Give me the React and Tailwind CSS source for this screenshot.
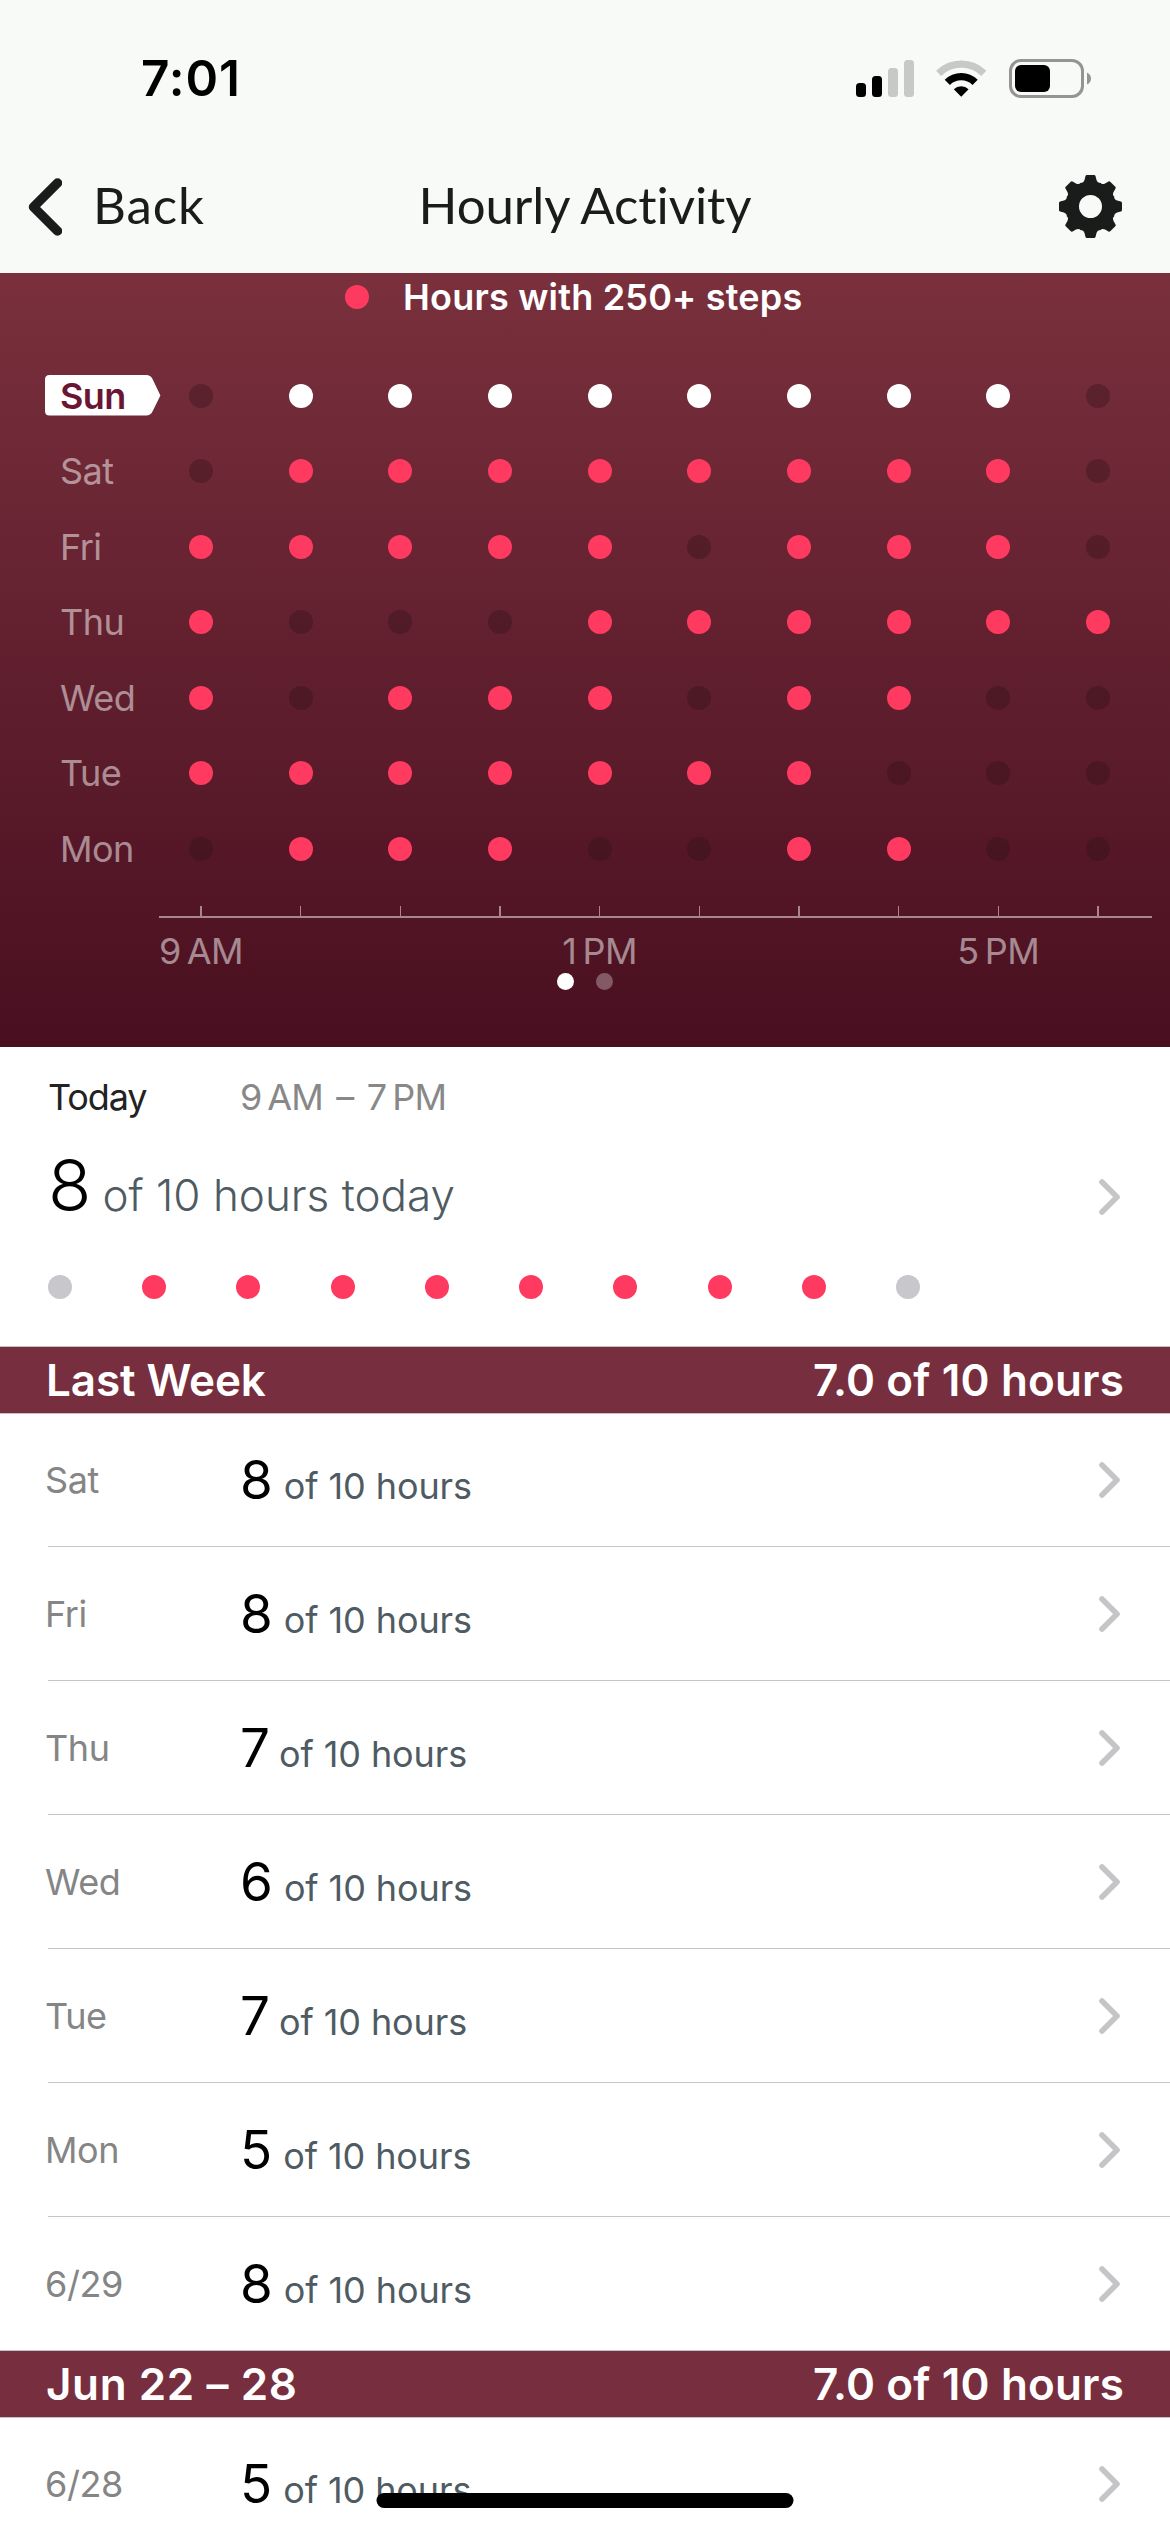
const CHART = [
  ["Sun", "0111111110"],
  ["Sat", "0111111110"],
  ["Fri", "1111101110"],
  ["Thu", "1000111111"],
  ["Wed", "1011101100"],
  ["Tue", "1111111000"],
  ["Mon", "0111001100"],
];

const AXIS_LABELS = { 0: "9\u2009AM", 4: "1\u2009PM", 8: "5\u2009PM" };

const LAST_WEEK = [
  ["Sat", 8],
  ["Fri", 8],
  ["Thu", 7],
  ["Wed", 6],
  ["Tue", 7],
  ["Mon", 5],
  ["6/29", 8],
];

const GEAR_TEETH = [0, 45, 90, 135, 180, 225, 270, 315];

function StatusBar() {
  return (
    <div className="flex h-[156px] items-center justify-between pl-[141px] pr-[79px]">
      <span className="text-[49.5px] font-semibold tracking-[0.9px] text-black">7:01</span>
      <div className="flex items-center">
        <svg width="58" height="37" viewBox="0 0 58 37">
          <rect x="0" y="23" width="10" height="14" rx="3.5" fill="#000" />
          <rect x="16" y="16" width="10" height="21" rx="3.5" fill="#000" />
          <rect x="32" y="8" width="10" height="29" rx="3.5" fill="#c7c9c7" />
          <rect x="48" y="0" width="10" height="37" rx="3.5" fill="#c7c9c7" />
        </svg>
        <svg className="ml-[22px]" width="51" height="37" viewBox="0 0 51 37">
          <path d="M2.6 13.4A32.4 32.4 0 0 1 47.8 13.4" fill="none" stroke="#c7c9c7" strokeWidth="7.2" />
          <path d="M11.3 22.4A19.7 19.7 0 0 1 39.1 22.4" fill="none" stroke="#000" strokeWidth="7.4" />
          <path d="M17.8 29.2A10.8 10.8 0 0 1 32.6 29.2L25.2 36.8Z" fill="#000" />
        </svg>
        <svg className="ml-[22px]" width="82" height="39" viewBox="0 0 82 39">
          <rect x="1.5" y="1.5" width="72" height="36" rx="10.5" fill="none" stroke="#949593" strokeWidth="3" />
          <rect x="6" y="6" width="35" height="27" rx="6" fill="#000" />
          <path d="M78 13.5Q82 15.5 82 19.5T78 25.5Z" fill="#949593" />
        </svg>
      </div>
    </div>
  );
}

function Gear() {
  return (
    <svg width="63" height="63" viewBox="-31.5 -31.5 63 63">
      <circle r="18.1" fill="none" stroke="#1a1c1b" strokeWidth="13.2" />
      {GEAR_TEETH.map((a) => (
        <path
          key={a}
          transform={`rotate(${a})`}
          d="M-10 -18L-10 -23.6Q-7 -23.6 -6 -26.6L-5 -30.4Q-4.7 -31.5 -3.6 -31.5H3.6Q4.7 -31.5 5 -30.4L6 -26.6Q7 -23.6 10 -23.6L10 -18Z"
          fill="#1a1c1b"
        />
      ))}
    </svg>
  );
}

function NavBar() {
  return (
    <div className="grid h-[99px] grid-cols-3 items-center font-[Lato,sans-serif] text-[51px] text-[#1a1c1b]">
      <div className="flex items-center pl-[28px]">
        <svg width="34" height="58" viewBox="0 0 34 58" className="mt-[3px]">
          <path d="M29.5 5L5.5 29L29.5 53" fill="none" stroke="#1a1c1b" strokeWidth="9.5" strokeLinecap="round" strokeLinejoin="round" />
        </svg>
        <span className="ml-[31px] tracking-[0.9px]">Back</span>
      </div>
      <h1 className="whitespace-nowrap text-center tracking-[-0.1px]">Hourly Activity</h1>
      <div className="flex justify-end pr-[48px] pt-[2px]">
        <Gear />
      </div>
    </div>
  );
}

function ChartRow({ day, hours, selected }) {
  return (
    <div className="flex h-[75.5px] items-center">
      <div className="relative w-[151.2px] pl-[60px]">
        {selected && (
          <svg className="absolute left-[45px] top-1/2 -mt-[21px]" width="116" height="41" viewBox="0 0 116 41">
            <path d="M4.5 0H101Q106 0 108 5L115.4 20.4L108 35.6Q106 40.6 101 40.6H4.5Q0 40.6 0 36V4.5Q0 0 4.5 0Z" fill="#fff" />
          </svg>
        )}
        <span className={selected ? "relative font-semibold tracking-[-0.6px] text-[#6a1533]" : "relative tracking-[-0.5px] text-white/50"}>
          {day}
        </span>
      </div>
      <div className="grid w-[996.6px] grid-cols-10 justify-items-center">
        {hours.split("").map((h, i) => (
          <span
            key={i}
            className={
              h === "0"
                ? "size-6 rounded-full bg-[#2f1018]/35"
                : selected
                  ? "size-6 rounded-full bg-white"
                  : "size-6 rounded-full bg-[#ff3a60]"
            }
          />
        ))}
      </div>
    </div>
  );
}

function Chart() {
  const cells = Array.from({ length: 10 }, (_, i) => i);
  return (
    <section className="h-[774px] bg-linear-to-b from-[#7a303d] to-[#490f20] text-[36px] leading-[44px]">
      <div className="flex h-[48px] items-center gap-[34px] pl-[345px] text-white">
        <span className="size-6 rounded-full bg-[#ff3a60]" />
        <span className="font-semibold tracking-[0.2px]">Hours with 250+ steps</span>
      </div>
      <div className="pt-[37px]">
        {CHART.map(([day, hours], i) => (
          <ChartRow key={day} day={day} hours={hours} selected={i === 0} />
        ))}
      </div>
      <div className="ml-[151.2px] mt-[19.5px] grid h-[10px] w-[996.6px] grid-cols-10 justify-items-center">
        {cells.map((i) => (
          <span key={i} className="w-[1.5px] bg-[#a9868f]" />
        ))}
      </div>
      <div className="ml-[159px] h-[2px] w-[993px] bg-[#a9868f]" />
      <div className="ml-[151.2px] mt-[10px] grid h-[46px] w-[996.6px] grid-cols-10 items-center text-white/50">
        {cells.map((i) => (
          <span key={i} className="flex justify-center whitespace-nowrap tracking-[-0.5px]">
            {AXIS_LABELS[i]}
          </span>
        ))}
      </div>
      <div className="-mt-px flex justify-center gap-[22px]">
        <span className="size-[17px] rounded-full bg-white" />
        <span className="size-[17px] rounded-full bg-white/30" />
      </div>
    </section>
  );
}

function Chevron() {
  return (
    <svg width="21" height="36" viewBox="0 0 21 36">
      <path d="M3 3L18 18L3 33" fill="none" stroke="#c5c5c7" strokeWidth="5.6" strokeLinecap="round" strokeLinejoin="round" />
    </svg>
  );
}

function Today() {
  return (
    <section className="h-[299px] bg-white pt-[24px]">
      <div className="flex h-[52px] items-center pl-[48px] text-[36px]">
        <span className="w-[192px] tracking-[-1.1px] text-[#222]">Today</span>
        <span className="tracking-[-0.8px] text-[#888] [word-spacing:4px]">{"9\u2009AM – 7\u2009PM"}</span>
      </div>
      <div className="mt-[26px] flex h-[72px] items-center justify-between pl-[48px] pr-[50px]">
        <div className="flex items-baseline gap-[11px] font-light">
          <span className="text-[71px] leading-[72px] text-black">8</span>
          <span className="text-[44px] leading-none text-[#4f5b62]">of 10 hours today</span>
        </div>
        <div className="mt-6">
          <Chevron />
        </div>
      </div>
      <div className="ml-[48px] mt-[54px] flex w-[872px] justify-between">
        {"0111111110".split("").map((h, i) => (
          <span key={i} className={h === "1" ? "size-6 rounded-full bg-[#ff3a60]" : "size-6 rounded-full bg-[#c7c7cc]"} />
        ))}
      </div>
    </section>
  );
}

function SectionBar({ title, wide }) {
  return (
    <div className="flex h-[68px] items-center justify-between border-y border-[#c8c2c5] bg-[#772e3e] pl-[46px] pr-[46px] text-[44px] font-semibold leading-[60px] text-white">
      <span className={wide ? "tracking-[0.6px]" : "tracking-[-0.1px]"}>{title}</span>
      <span className="tracking-[0.15px]">7.0 of 10 hours</span>
    </div>
  );
}

function DayRow({ label, value, first, last }) {
  return (
    <div className={first || last ? "h-[133px] bg-white" : "h-[134px] bg-white"}>
      <div className="flex h-full flex-col">
        <div className="flex flex-1 items-center pl-[45px] pr-[50px]">
          <span className="w-[195px] text-[36px] leading-[64px] tracking-[-0.4px] text-[#858585]">{label}</span>
          <div className="flex flex-1 items-baseline gap-[11px]">
            <span className={value === 7 ? "-mr-[2px] text-[53px] leading-[64px] text-black" : "text-[53px] leading-[64px] text-black"}>{value}</span>
            <span className="text-[36px] leading-none tracking-[-0.1px] text-[#4f5b62]">of 10 hours</span>
          </div>
          <Chevron />
        </div>
        {!last && <div className="ml-[48px] h-px bg-[#c5c5c7]" />}
      </div>
    </div>
  );
}

export default function App() {
  return (
    <div className="relative h-[2532px] w-[1170px] overflow-hidden bg-white font-[Inter,sans-serif]">
      <header className="h-[273px] bg-[#f8faf7]">
        <StatusBar />
        <NavBar />
      </header>
      <Chart />
      <Today />
      <SectionBar title="Last Week" />
      {LAST_WEEK.map(([label, value], i) => (
        <DayRow key={label} label={label} value={value} first={i === 0} last={i === LAST_WEEK.length - 1} />
      ))}
      <SectionBar title="Jun 22 – 28" wide />
      <DayRow label="6/28" value={5} first />
      <div className="absolute bottom-[24px] left-1/2 h-[15px] w-[417px] -translate-x-1/2 rounded-full bg-black" />
    </div>
  );
}
